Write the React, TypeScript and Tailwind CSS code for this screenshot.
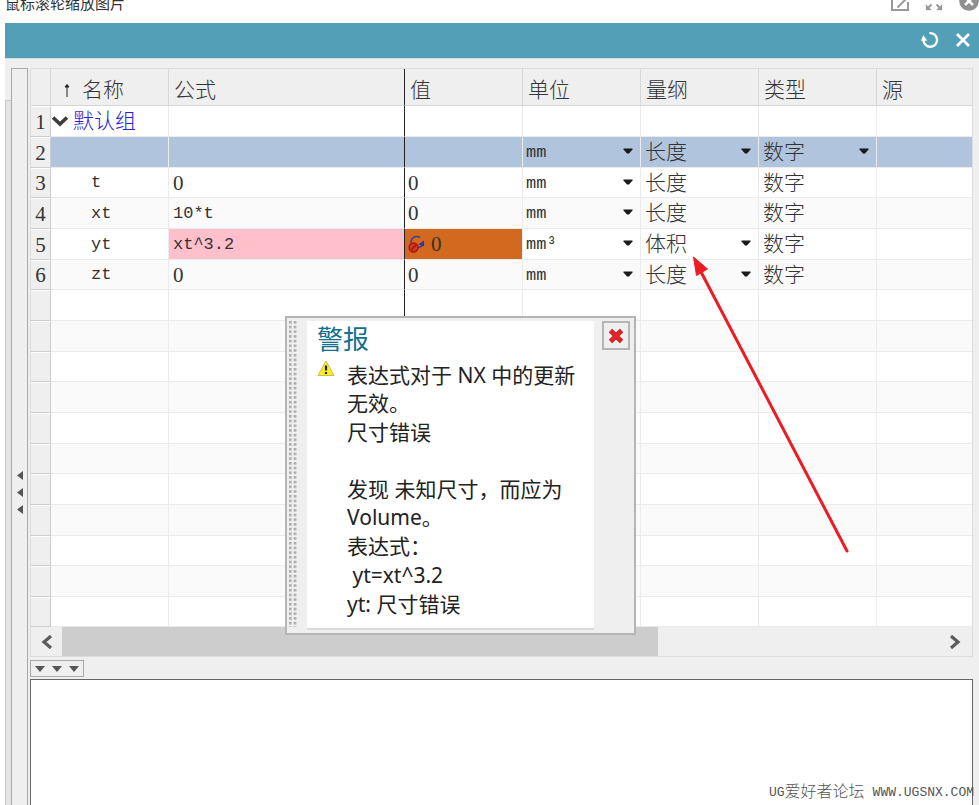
import clsx from 'clsx';

type Row = {
  name?: string;
  formula?: string;
  value?: string;
  unit?: string;
  dimension?: string;
  type?: string;
  // which cells open a list
  pickDimension?: boolean;
  pickType?: boolean;
  state?: 'group' | 'selected' | 'error';
};

const rows: Row[] = [
  { name: '默认组', state: 'group' },
  { unit: 'mm', dimension: '长度', type: '数字', pickDimension: true, pickType: true, state: 'selected' },
  { name: 't', formula: '0', value: '0', unit: 'mm', dimension: '长度', type: '数字' },
  { name: 'xt', formula: '10*t', value: '0', unit: 'mm', dimension: '长度', type: '数字' },
  { name: 'yt', formula: 'xt^3.2', value: '0', unit: 'mm³', dimension: '体积', type: '数字', pickDimension: true, state: 'error' },
  { name: 'zt', formula: '0', value: '0', unit: 'mm', dimension: '长度', type: '数字', pickDimension: true },
  ...Array.from({ length: 11 }, () => ({})),
];

const SONG = "font-['Liberation_Serif','Noto_Sans_CJK_SC',serif] font-light text-[21px]";
const MONO = "font-['Liberation_Mono',monospace] text-[17px]";
const YAHEI = "font-['Noto_Sans','Noto_Sans_CJK_SC',sans-serif]";

function Picker({ label, value, mono }: { label: string; value: string; mono?: boolean }) {
  return (
    <div className="relative">
      <select
        aria-label={label}
        defaultValue={value}
        className={clsx('block h-6 w-full appearance-none bg-transparent leading-6 outline-none', mono ? 'pt-px pl-[3px]' : 'pl-1', mono ? MONO : SONG)}
      >
        <option>{value}</option>
      </select>
      <svg viewBox="0 0 10 6" className="pointer-events-none absolute top-2 right-[7px] h-[6px] w-[10px]">
        <path d="M0.500 0.500h9v1L6 5.500H4L0.500 1.500z" fill="#1a1a1a" />
      </svg>
    </div>
  );
}

function ExpressionTable() {
  const head = 'border-r border-b border-[#d8d8d8] border-b-[#d5d5d5] pt-[5px] pl-[5px] text-left leading-6 font-light';
  return (
    <table className={clsx('w-full table-fixed border-separate border-spacing-0 text-[#333]', SONG)}>
      <colgroup>
        <col className="w-[20px]" />
        <col className="w-[118px]" />
        <col className="w-[236px]" />
        <col className="w-[118px]" />
        <col className="w-[118px]" />
        <col className="w-[118px]" />
        <col className="w-[118px]" />
        <col />
      </colgroup>
      <thead>
        <tr className="h-[37px] bg-[#efefef]">
          <th className={head} aria-label="#" />
          <th className={head}>
            <span className="flex items-center gap-3 pl-2">
              <svg viewBox="0 0 6 14" className="h-[14px] w-[6px]">
                <path d="M3 14V2M1 4L3 1.500l2 2.500z" fill="#222" stroke="#222" />
              </svg>
              名称
            </span>
          </th>
          <th className={clsx(head, 'border-r-[#222]')}>公式</th>
          <th className={head}>值</th>
          <th className={head}>单位</th>
          <th className={head}>量纲</th>
          <th className={head}>类型</th>
          <th className={clsx(head, 'border-r-0')}>源</th>
        </tr>
      </thead>
      <tbody>
        {rows.map((row, i) => {
          const cell = clsx('border-r border-b border-[#ebebeb] p-0 leading-6', row.state === 'selected' && 'bg-[#b0c4de]');
          const expr = row.formula === '0' ? SONG : clsx('pt-px', MONO);
          return (
            <tr key={i} className="h-[31px] bg-white even:bg-[#fafafa] nth-[3n]:h-[30px] last:h-[30px]">
              <th
                scope="row"
                className="border-t border-r border-b border-t-white border-r-[#cdcdcd] border-b-[#cdcdcd] bg-[#efefef] p-0 text-center leading-6 font-light"
              >
                {i < 6 && i + 1}
              </th>
              <td className={cell}>
                {row.state === 'group' ? (
                  <button className="flex items-center gap-1 text-[#2a1fd0]">
                    <svg viewBox="0 0 18 12" className="h-3 w-[18px]">
                      <path d="M2 2.5L9 9l7-6.5" fill="none" stroke="#3c3c3c" strokeWidth="3.6" />
                    </svg>
                    {row.name}
                  </button>
                ) : (
                  <span className={clsx('block pt-px pl-10 leading-6', MONO)}>{row.name}</span>
                )}
              </td>
              <td className={clsx(cell, 'border-r-[#222]', row.state === 'error' && 'bg-[#ffc0cb]')}>
                <span className={clsx('block pl-1 leading-6', expr)}>{row.formula}</span>
              </td>
              <td className={clsx(cell, row.state === 'error' && 'bg-[#d2691e]')}>
                <span className="flex items-center gap-[6px] pl-[3px]">
                  {row.state === 'error' && (
                    <svg viewBox="0 0 17 18" className="h-[18px] w-[17px]">
                      <path d="M3 8C3 2 8 0 12 2.500M8 13c3 0 5-1 7-3.500" fill="none" stroke="#33409c" strokeWidth="1.500" />
                      <path d="M10.500 9.500l5.500-4v6z" fill="#2338bb" />
                      <circle cx="5.500" cy="12.500" r="4.400" fill="#cb3a20" stroke="#b80f0f" strokeWidth="1.500" />
                      <path d="M3 15l5-5" stroke="#a51414" strokeWidth="1.500" />
                    </svg>
                  )}
                  {row.value}
                </span>
              </td>
              <td className={cell}>{row.unit && <Picker label="单位" value={row.unit} mono />}</td>
              <td className={cell}>
                {row.pickDimension ? <Picker label="量纲" value={row.dimension!} /> : <span className="block pl-1">{row.dimension}</span>}
              </td>
              <td className={cell}>
                {row.pickType ? <Picker label="类型" value={row.type!} /> : <span className="block pl-1">{row.type}</span>}
              </td>
              <td className={clsx(cell, 'border-r-0')} />
            </tr>
          );
        })}
      </tbody>
    </table>
  );
}

function AlertDialog() {
  return (
    <div
      role="dialog"
      aria-label="警报"
      className="absolute top-[247px] left-[254px] flex w-[351px] border-2 border-[#b5b5b5] bg-[#efefef] py-[3px] pr-1 pl-[2px]"
    >
      <svg className="h-[308px] w-[18px] shrink-0">
        <defs>
          <pattern id="grip" width="4.700" height="4.700" patternUnits="userSpaceOnUse">
            <rect width="2.600" height="2.600" fill="#ababab" />
          </pattern>
        </defs>
        <rect width="8" height="306" fill="url(#grip)" />
      </svg>
      <div className={clsx('h-[309px] flex-1 border-b-2 border-[#dadada] bg-white pl-[10px] text-[#222]', YAHEI)}>
        <h2 className="pt-[2px] text-[26px] leading-8 text-[#14708f]">警报</h2>
        <div className="flex gap-3 pt-[6px]">
          <svg viewBox="0 0 18 17" className="-mt-px h-[17px] w-[18px] shrink-0">
            <path d="M9 1L17 15.500H1z" fill="#ffee1c" stroke="#c9bd55" strokeLinejoin="round" />
            <path d="M9 5.500v5M9 12v2" stroke="#222" strokeWidth="2.200" />
          </svg>
          <div className="flex flex-col gap-px text-[21px] leading-7 whitespace-pre">
            <p>{'表达式对于 NX 中的更新\n无效。'}</p>
            <p>尺寸错误</p>
            <p className="pt-7">{'发现 未知尺寸，而应为\nVolume。'}</p>
            <p>表达式：</p>
            <p>{' yt=xt^3.2'}</p>
            <p>yt: 尺寸错误</p>
          </div>
        </div>
      </div>
      <button aria-label="关闭" className="ml-2 flex h-[29px] w-7 shrink-0 items-center justify-center border-2 border-[#b5b5b5]">
        <svg viewBox="0 0 16 16" className="size-4">
          <path d="M2.500 2.500l11 11M13.500 2.500l-11 11" stroke="#a81818" strokeWidth="4.600" />
          <path d="M2.700 2.700l10.600 10.600M13.300 2.700L2.700 13.300" stroke="#ec2127" strokeWidth="3.400" />
        </svg>
      </button>
    </div>
  );
}

export default function App() {
  return (
    <div className="relative flex h-screen flex-col overflow-hidden bg-white">
      <header className={clsx('flex h-[23px] shrink-0 items-end justify-between overflow-hidden pl-[5px] text-[#333]', YAHEI)}>
        <span className="pb-[10px] text-[15px] leading-5">鼠标滚轮缩放图片</span>
        <div className="flex items-end gap-4 pb-3">
          <button aria-label="打开">
            <svg viewBox="0 0 18 18" className="h-[18px] w-[18px]" fill="none" stroke="#999" strokeWidth="2">
              <path d="M8 1H1v16h16V9M6.500 14.500L17 4" />
            </svg>
          </button>
          <button aria-label="全屏">
            <svg viewBox="0 0 18 18" className="h-[18px] w-[18px]" fill="#999" stroke="#999" strokeWidth="2">
              <path d="M6.500 11.500l-4 4M11.500 11.500l4 4M6.500 6.500l-4-4M11.500 6.500l4-4" />
              <path d="M1 11.500V17h5.500zM17 11.500V17h-5.500zM1 6.500V1h5.500zM17 6.500V1h-5.500z" strokeWidth="0.300" />
            </svg>
          </button>
          <button aria-label="关闭图片">
            <svg viewBox="0 0 20 20" className="size-5">
              <circle cx="10" cy="10" r="9.800" fill="#8f8f8f" />
              <path d="M6 6l8 8M14 6l-8 8" stroke="#fff" strokeWidth="2.500" />
            </svg>
          </button>
        </div>
      </header>

      <main className="ml-[5px] flex min-h-0 flex-1 flex-col bg-[#efefef]">
        <div className="flex h-9 shrink-0 items-center justify-end gap-4 border-b border-[#c9dde4] bg-[#549fb8] pr-2 pb-px">
          <button aria-label="重置">
            <svg viewBox="0 0 18 18" className="size-[18px]" fill="none" stroke="#fff" strokeWidth="2.400">
              <path d="M8.500 2.200a6.800 6.800 0 1 1-6 6.800" />
              <path d="M0 9.500L2.500 4.500l3.500 5z" fill="#fff" strokeWidth="0.300" />
            </svg>
          </button>
          <button aria-label="关闭">
            <svg viewBox="0 0 16 16" className="size-4">
              <path d="M2 2l12 12M14 2L2 14" stroke="#fff" strokeWidth="2.800" />
            </svg>
          </button>
        </div>

        <div className="flex min-h-0 flex-1 pt-[9px]">
          {/* Collapsed side panel */}
          <div className="mt-8 w-[6px] border-t border-l border-[#c8c8c8] bg-[#e4e4e4]" />
          <button
            aria-label="展开面板"
            className="flex w-[17px] shrink-0 flex-col items-center gap-2 border-t border-r border-l border-[#a8a8a8] pt-[402px]"
          >
            {[0, 1, 2].map((i) => (
              <svg key={i} viewBox="0 0 6 9" className="h-[9px] w-[6px]">
                <path d="M6 0v9L0 4.500z" fill="#555" />
              </svg>
            ))}
          </button>

          <div className="ml-[2px] flex min-w-0 flex-1 flex-col pr-[6px]">
            <div className="relative border border-[#dcdcdc]">
              <ExpressionTable />
              <div className="flex h-[29px] items-center bg-[#efefef]">
                <button aria-label="向左滚动" className="flex h-full w-[31px] items-center justify-center">
                  <svg viewBox="0 0 12 14" className="h-[14px] w-3">
                    <path d="M10 1L3 7l7 6" fill="none" stroke="#5c5c5c" strokeWidth="3.200" />
                  </svg>
                </button>
                <div className="h-full flex-1">
                  <div className="h-full w-[68%] bg-[#cdcdcd]" />
                </div>
                <button aria-label="向右滚动" className="flex h-full w-[34px] items-center justify-center">
                  <svg viewBox="0 0 12 14" className="h-[14px] w-3">
                    <path d="M2 1l7 6-7 6" fill="none" stroke="#5c5c5c" strokeWidth="3.200" />
                  </svg>
                </button>
              </div>
              <AlertDialog />
              {/* Callout pointing at the dimension cell */}
              <svg
                viewBox="0 0 160 300"
                className="pointer-events-none absolute top-[186px] left-[661px] h-[300px] w-[160px]"
                aria-hidden="true"
              >
                <path d="M8 15l147 281" stroke="#ed1c24" strokeWidth="3" strokeLinecap="round" />
                <path d="M1.500 2L15.500 14 4.500 20.500z" fill="#ed1c24" stroke="#ed1c24" />
              </svg>
            </div>

            <button
              aria-label="展开详细信息"
              className="mt-[3px] flex h-[17px] w-[54px] shrink-0 items-center justify-center gap-[7px] border border-[#a9a9a9]"
            >
              {[0, 1, 2].map((i) => (
                <svg key={i} viewBox="0 0 10 6" className="h-[6px] w-[10px]">
                  <path d="M0 0h10L5 6z" fill="#555" />
                </svg>
              ))}
            </button>
            <textarea
              aria-label="详细信息"
              className="mt-[2px] block min-h-0 w-full flex-1 resize-none border border-b-0 border-[#666] bg-white outline-none"
            />
          </div>
        </div>
      </main>

      <div className="pointer-events-none absolute right-[5px] bottom-1 flex items-center gap-2 leading-4 text-[#555]">
        <span className="flex items-center font-['Liberation_Mono','Noto_Sans_CJK_SC',monospace] text-[13px]">
          UG<span className="text-[16px] font-light">爱好者论坛</span>
        </span>
        <span className="font-['Liberation_Mono',monospace] text-[13px]">WWW.UGSNX.COM</span>
      </div>
    </div>
  );
}
